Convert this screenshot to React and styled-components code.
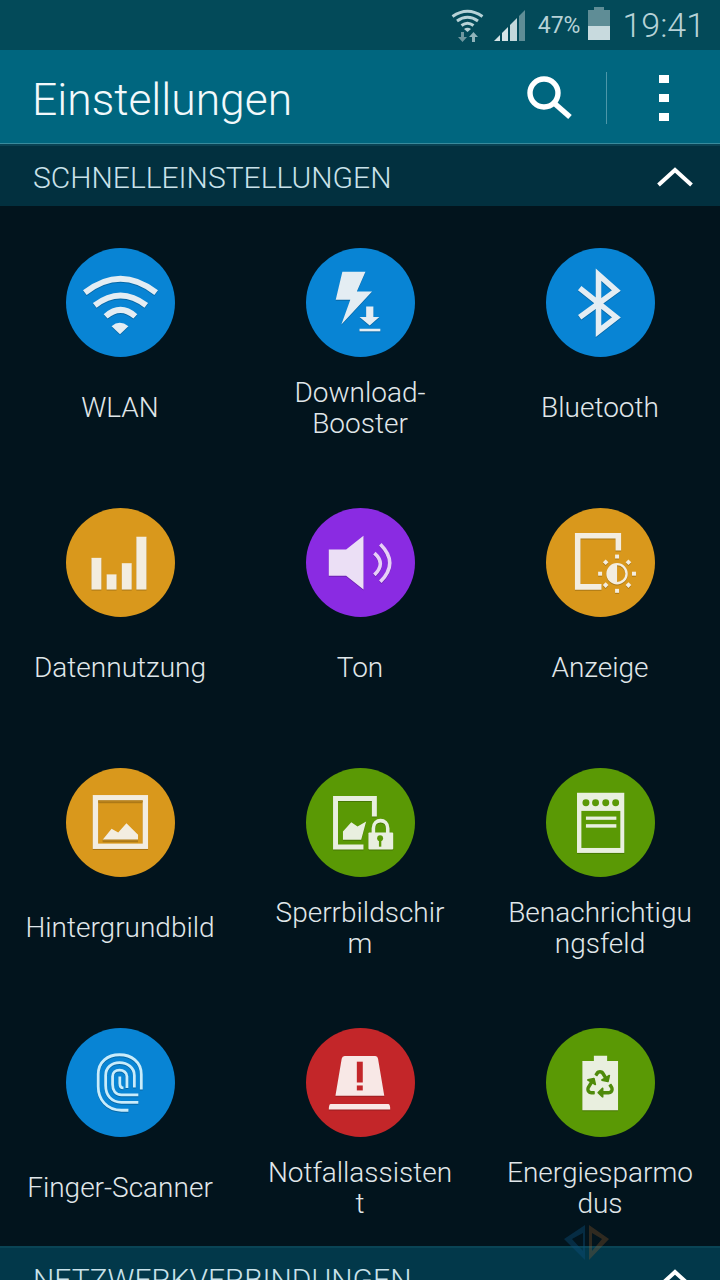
import React from "react";
import styled, { createGlobalStyle } from "styled-components";
import { FaRecycle } from "react-icons/fa";

const GlobalStyle = createGlobalStyle`
  html, body {
    margin: 0;
    padding: 0;
    background: #02141d;
  }
  * {
    box-sizing: border-box;
  }
`;

const WHITE = "#e4edf3";
const CREAM = "#f3ede0";
const LEAF = "#e9efdf";

const BLUE = "#0884d4";
const ORANGE = "#d9981c";
const PURPLE = "#8a2be2";
const GREEN = "#5a9905";
const RED = "#c32629";

const WifiIcon = () => (
  <IconSvg viewBox="0 0 110 110">
    <g fill="none" stroke={WHITE} strokeWidth="6">
      <path d="M19 45 Q55 17 91 45" />
      <path d="M29 58 Q55 38 81 58" />
      <path d="M40 69 Q55 56 70 69" />
    </g>
    <path d="M46 79 Q54 72 63 79 L54.5 87 Z" fill={WHITE} />
  </IconSvg>
);

const BoosterIcon = () => (
  <IconSvg viewBox="0 0 110 110">
    <g fill={WHITE}>
      <path d="M36.7 24 H60 L51.3 44 H66.7 L35.7 77.3 L44.7 52.3 H30 Z" />
      <path d="M60.7 59 H68 V69.7 H74 L64.3 78.3 L54 69.7 H60.7 Z" />
      <rect x="54" y="81.5" width="21" height="2.6" />
    </g>
  </IconSvg>
);

const BluetoothIcon = () => (
  <IconSvg viewBox="0 0 110 110">
    <path
      d="M34 40.5 L71 70 L53 84 V27 L71 43 L34 70"
      fill="none"
      stroke={WHITE}
      strokeWidth="5.6"
    />
  </IconSvg>
);

const DataIcon = () => (
  <IconSvg viewBox="0 0 110 110">
    <g fill={CREAM}>
      <rect x="25.7" y="50.3" width="10" height="32" />
      <rect x="41" y="67" width="10" height="15.3" />
      <rect x="56.3" y="55.7" width="10" height="26.6" />
      <rect x="71" y="29" width="10.2" height="53.3" />
    </g>
  </IconSvg>
);

const SoundIcon = () => (
  <IconSvg viewBox="0 0 110 110">
    <path d="M23 42 H40.5 L58 28 V82.3 L40.5 68.3 H23 Z" fill="#ebdff5" />
    <g fill="none" stroke="#e6d0f7" strokeWidth="3.6">
      <path d="M69 45.5 Q81 56 69 67.5" />
      <path d="M75 36.5 Q94 55.5 75 74.5" />
    </g>
  </IconSvg>
);

const DisplayIcon = () => (
  <IconSvg viewBox="0 0 110 110">
    <path d="M73 43 V28 H32 V79.6 H56" fill="none" stroke={CREAM} strokeWidth="5.6" />
    <circle cx="71.7" cy="66.3" r="9.6" fill="none" stroke={CREAM} strokeWidth="2.4" />
    <path d="M71.7 56.7 A9.6 9.6 0 0 0 71.7 75.9 Z" fill={CREAM} />
    <g fill={CREAM}>
      <rect x="69.7" y="47" width="4" height="4" />
      <rect x="69.7" y="81.6" width="4" height="4" />
      <rect x="52.6" y="64.3" width="4" height="4" />
      <rect x="86.8" y="64.3" width="4" height="4" />
      <rect x="58.2" y="52.8" width="4" height="4" transform="rotate(45 60.2 54.8)" />
      <rect x="81.2" y="52.8" width="4" height="4" transform="rotate(45 83.2 54.8)" />
      <rect x="58.2" y="75.8" width="4" height="4" transform="rotate(45 60.2 77.8)" />
      <rect x="81.2" y="75.8" width="4" height="4" transform="rotate(45 83.2 77.8)" />
    </g>
  </IconSvg>
);

const WallpaperIcon = () => (
  <IconSvg viewBox="0 0 110 110">
    <rect x="29.7" y="30" width="50.4" height="49" fill="none" stroke={CREAM} strokeWidth="5.4" />
    <rect x="32.4" y="32.7" width="45" height="1.8" fill="#b9831d" />
    <path d="M37 72.3 L46 61.3 L52.7 65 L61 55.7 L72.7 67.3 V72.3 Z" fill={CREAM} />
    <rect x="37" y="72.3" width="35.7" height="1.6" fill="#b9831d" />
  </IconSvg>
);

const LockScreenIcon = () => (
  <IconSvg viewBox="0 0 110 110">
    <path d="M69 49 V30.8 H29.8 V79.8 H58" fill="none" stroke={LEAF} strokeWidth="5" />
    <path d="M37.3 72.3 V64 L45.7 54.7 L52 59 L60.7 54 L55.7 72.3 Z" fill={LEAF} />
    <path d="M68 66 V61 C68 50.5 82.5 50.5 82.5 61 V66" fill="none" stroke={LEAF} strokeWidth="3.6" />
    <rect x="63" y="65" width="25" height="17.3" rx="1" fill={LEAF} />
    <circle cx="74.8" cy="70.8" r="3" fill={GREEN} />
    <rect x="73.6" y="71" width="2.4" height="8.4" fill={GREEN} />
  </IconSvg>
);

const PanelIcon = () => (
  <IconSvg viewBox="0 0 110 110">
    <rect x="31.3" y="25" width="47.7" height="60.7" fill={LEAF} />
    <g fill={GREEN}>
      <circle cx="40.3" cy="35" r="3.5" />
      <circle cx="50" cy="35" r="3.5" />
      <circle cx="60.3" cy="35" r="3.5" />
      <circle cx="70.3" cy="35" r="3.5" />
      <rect x="35.7" y="43.3" width="39.3" height="37.4" />
    </g>
    <rect x="40.3" y="49" width="30.7" height="3.3" fill={LEAF} />
    <rect x="40.3" y="56.7" width="30.7" height="3.5" fill={LEAF} />
  </IconSvg>
);

const FingerIcon = () => (
  <IconSvg viewBox="0 0 110 110">
    <g fill="none" stroke="#c9ecfb" strokeWidth="2.8">
      <path d="M63 83 H56 C41 83 32.5 72 32.5 59 V47 C32.5 34 42 27 54 27 C66 27 76 34 76 47 V62" />
      <path d="M73 75 H56 C46 75 40 68 40 58 V48 C40 40 46 35 54 35 C62 35 69 40 69 48 V60" />
      <path d="M73 67.5 H56 C50 67.5 47 63 47 57 V49 C47 45 50 42.5 54 42.5 C58 42.5 61.5 45 61.5 49 V60.5" />
      <path d="M54.3 49 V56 C54.3 59 55.5 60.5 58 60.5" />
    </g>
  </IconSvg>
);

const AlarmIcon = () => (
  <IconSvg viewBox="0 0 110 110">
    <path
      d="M39 28.3 H70 Q72.3 28.3 72.7 31 L79 68.3 H29.7 L36 31 Q36.5 28.3 39 28.3 Z"
      fill="#f8e8e6"
    />
    <rect x="51.3" y="34" width="6" height="21" fill={RED} />
    <rect x="51.3" y="58" width="6" height="5" fill={RED} />
    <path d="M25 76.7 H83 Q85 76.7 85 82.3 H23 Q23 76.7 25 76.7 Z" fill="#f8e8e6" />
  </IconSvg>
);

const BatteryIcon = () => (
  <IconSvg viewBox="0 0 110 110">
    <rect x="48.3" y="28" width="13.4" height="6" fill={LEAF} />
    <rect x="36.7" y="33.3" width="36" height="49.7" fill={LEAF} />
    <FaRecycle x="40.5" y="42.5" size="28" color="#4f8a0b" />
  </IconSvg>
);

const tiles = [
  { label: "WLAN", color: BLUE, Icon: WifiIcon },
  { label: "Download-Booster", color: BLUE, Icon: BoosterIcon },
  { label: "Bluetooth", color: BLUE, Icon: BluetoothIcon },
  { label: "Datennutzung", color: ORANGE, Icon: DataIcon },
  { label: "Ton", color: PURPLE, Icon: SoundIcon },
  { label: "Anzeige", color: ORANGE, Icon: DisplayIcon },
  { label: "Hintergrundbild", color: ORANGE, Icon: WallpaperIcon },
  { label: "Sperrbildschirm", color: GREEN, Icon: LockScreenIcon },
  { label: "Benachrichtigungsfeld", color: GREEN, Icon: PanelIcon },
  { label: "Finger-Scanner", color: BLUE, Icon: FingerIcon },
  { label: "Notfallassistent", color: RED, Icon: AlarmIcon },
  { label: "Energiesparmodus", color: GREEN, Icon: BatteryIcon },
];

const Chevron = () => (
  <ChevronSvg viewBox="0 0 36 20">
    <path d="M1.5 18 L18 3 L34.5 18" fill="none" stroke="#fff" strokeWidth="4" />
  </ChevronSvg>
);

const App = () => {
  return (
    <Screen>
      <GlobalStyle />
      <StatusBar>
        <StatusWifi viewBox="0 0 33 34">
          <g fill="none" stroke="#b7d2d7" strokeWidth="3">
            <path d="M1.5 8.5 Q16.5 -2 31.5 8.5" />
            <path d="M6 13 Q16.5 5.5 27 13" />
            <path d="M10.5 17.5 Q16.5 13 22.5 17.5" />
          </g>
          <path d="M13 21 Q16.5 18.5 20 21 L16.5 24 Z" fill="#b7d2d7" />
          <path d="M10 24 H13 V29 H16 L11.5 34 L7 29 H10 Z" fill="#6f979f" />
          <path d="M21 34 H24 V29 H27 L22.5 24 L18 29 H21 Z" fill="#8fb3ba" />
        </StatusWifi>
        <StatusSignal viewBox="0 0 32 31">
          <path d="M0 31 L6 25 V31 Z" fill="#d6e4e6" />
          <path d="M8 23 L14 17 V31 H8 Z" fill="#d6e4e6" />
          <path d="M16 15 L23 8 V31 H16 Z" fill="#c3d7da" />
          <path d="M25 6 L31 0 V31 H25 Z" fill="#5f8d96" />
        </StatusSignal>
        <Percent>47%</Percent>
        <StatusBattery>
          <BatteryFill />
        </StatusBattery>
        <Clock>19:41</Clock>
      </StatusBar>

      <ActionBar>
        <Title>Einstellungen</Title>
        <Actions>
          <SearchSvg viewBox="0 0 46 44">
            <circle cx="17" cy="17" r="14" fill="none" stroke="#fff" strokeWidth="5.4" />
            <path d="M27 27 L43 41" fill="none" stroke="#fff" strokeWidth="5.4" />
          </SearchSvg>
          <Divider />
          <Overflow>
            <Dot />
            <Dot />
            <Dot />
          </Overflow>
        </Actions>
      </ActionBar>

      <SectionHeader>
        <SectionTitle>SCHNELLEINSTELLUNGEN</SectionTitle>
        <Chevron />
      </SectionHeader>

      <Grid>
        {tiles.map(({ label, color, Icon }) => (
          <Tile key={label}>
            <Circle color={color}>
              <Icon />
            </Circle>
            <LabelArea>
              <Label>{label}</Label>
            </LabelArea>
          </Tile>
        ))}
      </Grid>

      <SectionHeader $lower>
        <SectionTitle>NETZWERKVERBINDUNGEN</SectionTitle>
        <Chevron />
      </SectionHeader>

      <Watermark viewBox="0 0 47 35">
        <path d="M21 0 L0 14 L21 35 Z M19 8 L8 14 L19 26 Z" fill="#0c4f7e" fillOpacity="0.4" fillRule="evenodd" />
        <path d="M25 0 L45 14 L25 35 Z M28 8 V26 L38 14 Z" fill="#a8652a" fillOpacity="0.28" fillRule="evenodd" />
      </Watermark>
    </Screen>
  );
};

const Screen = styled.div`
  position: relative;
  width: 720px;
  height: 1280px;
  overflow: hidden;
  display: flex;
  flex-direction: column;
  background: #02141d;
  font-family: Roboto, "Liberation Sans", sans-serif;
  font-weight: 300;
`;

const StatusBar = styled.div`
  height: 50px;
  flex: none;
  display: flex;
  align-items: center;
  justify-content: flex-end;
  padding-right: 15px;
  background: #034a59;
`;

const StatusWifi = styled.svg`
  width: 33px;
  height: 34px;
  margin-right: 10px;
`;

const StatusSignal = styled.svg`
  width: 32px;
  height: 31px;
  margin-right: 12px;
`;

const Percent = styled.span`
  font-size: 23px;
  font-weight: 400;
  color: #b7d2d7;
  margin-right: 8px;
`;

const StatusBattery = styled.div`
  position: relative;
  width: 22px;
  height: 30px;
  margin-right: 12px;
  background: #5f8d96;
  &::before {
    content: "";
    position: absolute;
    top: -3px;
    left: 6px;
    width: 10px;
    height: 3px;
    background: #5f8d96;
  }
`;

const BatteryFill = styled.div`
  position: absolute;
  left: 0;
  right: 0;
  bottom: 0;
  height: 14px;
  background: #c8dade;
`;

const Clock = styled.span`
  font-size: 34px;
  color: #b7d2d7;
`;

const ActionBar = styled.div`
  height: 94px;
  flex: none;
  display: flex;
  align-items: center;
  justify-content: space-between;
  padding: 0 51px 0 32px;
  background: #00667f;
  border-bottom: 1px solid #3a8b9d;
`;

const Title = styled.h1`
  margin: 6px 0 0;
  font-size: 44.4px;
  font-weight: 300;
  color: #f2f9fb;
`;

const Actions = styled.div`
  display: flex;
  align-items: center;
  margin-top: 2px;
`;

const SearchSvg = styled.svg`
  width: 46px;
  height: 44px;
`;

const Divider = styled.div`
  width: 1px;
  height: 52px;
  margin: 0 52px 0 33px;
  background: #4d97a9;
`;

const Overflow = styled.div`
  display: flex;
  flex-direction: column;
  gap: 11px;
`;

const Dot = styled.div`
  width: 10px;
  height: 8px;
  background: #fff;
`;

const SectionHeader = styled.div`
  height: 62px;
  flex: none;
  display: flex;
  align-items: center;
  justify-content: space-between;
  margin-top: ${({ $lower }) => ($lower ? "8px" : "0")};
  padding: 2px 27px 0 33px;
  background: ${({ $lower }) => ($lower ? "#02384a" : "#02303f")};
  border-top: 2px solid ${({ $lower }) => ($lower ? "#0a4455" : "#0a4253")};
`;

const SectionTitle = styled.h2`
  margin: 0;
  font-size: 30px;
  font-weight: 300;
  color: #c9e2ea;
  white-space: nowrap;
`;

const ChevronSvg = styled.svg`
  width: 36px;
  height: 20px;
`;

const Grid = styled.div`
  display: grid;
  grid-template-columns: repeat(3, 240px);
  row-gap: 50px;
  padding-top: 42px;
`;

const Tile = styled.div`
  display: flex;
  flex-direction: column;
  align-items: center;
`;

const Circle = styled.div`
  width: 109px;
  height: 109px;
  margin-left: 1px;
  border-radius: 50%;
  background: ${({ color }) => color};
`;

const IconSvg = styled.svg`
  display: block;
  width: 109px;
  height: 109px;
  filter: drop-shadow(0 1.5px 0 rgba(0, 0, 0, 0.22));
`;

const LabelArea = styled.div`
  height: 101px;
  width: 190px;
  display: flex;
  align-items: center;
  justify-content: center;
`;

const Label = styled.div`
  width: 100%;
  font-size: 28px;
  line-height: 31px;
  text-align: center;
  color: #e0e7ea;
  overflow-wrap: anywhere;
`;

const Watermark = styled.svg`
  position: absolute;
  left: 564px;
  top: 1225px;
  width: 47px;
  height: 35px;
`;

export default App;
